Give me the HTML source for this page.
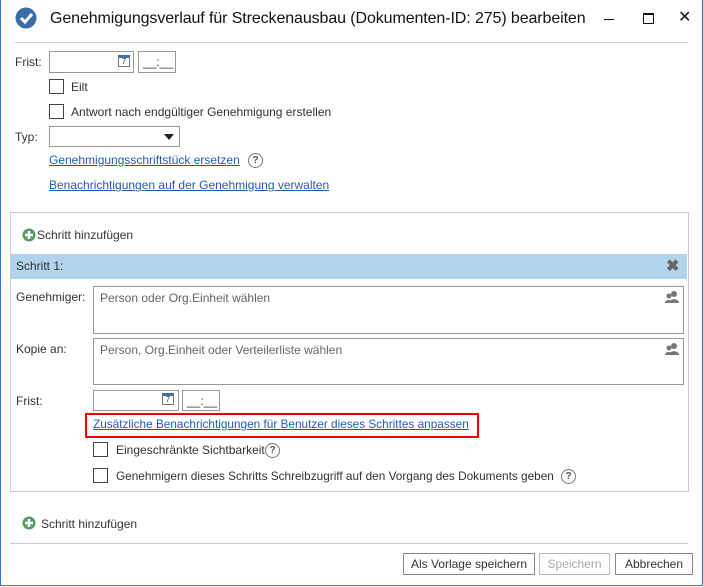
<!DOCTYPE html><html><head><style>
body{margin:0;width:703px;height:587px;background:#fff;font-family:"Liberation Sans",sans-serif;font-size:12px;color:#333;position:relative;overflow:hidden}
.a{position:absolute}
.win{position:absolute;left:0;top:0;width:701px;height:585px;border:1px solid #2b79d0;border-top:none}
.in{position:absolute;border:1px solid #999;background:#fff;box-sizing:border-box}
.cb{position:absolute;width:15px;height:15px;border:1px solid #444;box-sizing:border-box;background:#fff}
a{color:#1a5fb4;text-decoration:underline}
.btn{position:absolute;border:1px solid #888;background:#fff;box-sizing:border-box;text-align:center;line-height:20px;font-size:12px}
.q{position:absolute;width:13px;height:13px;border:1px solid #777;border-radius:50%;font-size:10px;line-height:13px;text-align:center;color:#555;font-weight:bold}
.cal{position:absolute;width:12px;height:12px;border:1px solid #777;border-top:3px solid #3a6fb0;box-sizing:border-box;font-size:8px;line-height:8px;text-align:center}
</style></head><body>
<div class="win"></div>
<svg class="a" style="left:15px;top:7px" width="22" height="22"><circle cx="11" cy="11" r="10.5" fill="#3b6ea8"/><path d="M6 11l4 4 7-8" stroke="#fff" stroke-width="3" fill="none"/></svg>
<div class="a" style="left:50px;top:10px;font-size:16px;letter-spacing:-0.1px;color:#111">Genehmigungsverlauf für Streckenausbau (Dokumenten-ID: 275) bearbeiten</div>
<div class="a" style="left:604px;top:19px;width:10px;height:1px;background:#111"></div>
<div class="a" style="left:643px;top:13px;width:9px;height:8px;border:1px solid #111;border-top-width:2px"></div>
<div class="a" style="left:678px;top:7px;font-size:16px;color:#111">✕</div>
<div class="a" style="left:15px;top:42px;width:673px;height:1px;background:#ccc"></div>

<div class="a" style="left:15px;top:55px">Frist:</div>
<div class="in" style="left:49px;top:51px;width:85px;height:22px"></div><div class="cal" style="left:118px;top:55px">7</div>
<div class="in" style="left:138px;top:51px;width:38px;height:22px;padding:3px 0 0 4px">__:__</div>
<div class="cb" style="left:49px;top:79px"></div><div class="a" style="left:71px;top:80px">Eilt</div>
<div class="cb" style="left:49px;top:104px"></div><div class="a" style="left:71px;top:105px">Antwort nach endgültiger Genehmigung erstellen</div>
<div class="a" style="left:15px;top:130px">Typ:</div>
<div class="in" style="left:49px;top:126px;width:131px;height:21px"></div>
<div class="a" style="left:164px;top:134px;border:5px solid transparent;border-top:6px solid #222;border-bottom:0"></div>
<a class="a" style="left:49px;top:153px">Genehmigungsschriftstück ersetzen</a><div class="q" style="left:248px;top:153px">?</div>
<a class="a" style="left:49px;top:178px">Benachrichtigungen auf der Genehmigung verwalten</a>

<div class="a" style="left:10px;top:212px;width:677px;height:278px;border:1px solid #ccc"></div>
<svg class="a" style="left:22px;top:228px" width="14" height="14"><circle cx="7" cy="7" r="6.5" fill="#5a9a6a"/><path d="M7 3v8M3 7h8" stroke="#fff" stroke-width="2.5"/></svg>
<div class="a" style="left:37px;top:228px">Schritt hinzufügen</div>
<div class="a" style="left:11px;top:254px;width:676px;height:25px;background:#b1d4ec"></div>
<div class="a" style="left:16px;top:259px">Schritt 1:</div>
<div class="a" style="left:666px;top:256px;font-size:16px;font-weight:bold;color:#666">✖</div>
<div class="a" style="left:16px;top:290px">Genehmiger:</div>
<div class="in" style="left:93px;top:286px;width:591px;height:48px;color:#666;padding:4px 6px">Person oder Org.Einheit wählen</div>
<svg class="a" style="left:664px;top:290px" width="16" height="14"><circle cx="10" cy="4" r="3" fill="#777"/><path d="M5 13c0-5 10-5 10 0z" fill="#777"/><circle cx="5" cy="6" r="2.5" fill="#777"/><path d="M1 13c0-4 7-4 7 0z" fill="#777"/></svg>
<div class="a" style="left:16px;top:342px">Kopie an:</div>
<div class="in" style="left:93px;top:338px;width:591px;height:47px;color:#666;padding:4px 6px">Person, Org.Einheit oder Verteilerliste wählen</div>
<svg class="a" style="left:664px;top:342px" width="16" height="14"><circle cx="10" cy="4" r="3" fill="#777"/><path d="M5 13c0-5 10-5 10 0z" fill="#777"/><circle cx="5" cy="6" r="2.5" fill="#777"/><path d="M1 13c0-4 7-4 7 0z" fill="#777"/></svg>
<div class="a" style="left:16px;top:394px">Frist:</div>
<div class="in" style="left:93px;top:390px;width:86px;height:21px"></div><div class="cal" style="left:162px;top:393px">7</div>
<div class="in" style="left:182px;top:390px;width:38px;height:21px;padding:3px 0 0 4px">__:__</div>
<div class="a" style="left:85px;top:413px;width:390px;height:21px;border:2px solid #e00"></div>
<a class="a" style="left:93px;top:417px;font-size:11.8px">Zusätzliche Benachrichtigungen für Benutzer dieses Schrittes anpassen</a>
<div class="cb" style="left:93px;top:442px"></div><div class="a" style="left:116px;top:443px">Eingeschränkte Sichtbarkeit</div><div class="q" style="left:265px;top:443px">?</div>
<div class="cb" style="left:93px;top:468px"></div><div class="a" style="left:116px;top:469px;font-size:11.8px">Genehmigern dieses Schritts Schreibzugriff auf den Vorgang des Dokuments geben</div><div class="q" style="left:561px;top:469px">?</div>

<svg class="a" style="left:22px;top:516px" width="14" height="14"><circle cx="7" cy="7" r="6.5" fill="#5a9a6a"/><path d="M7 3v8M3 7h8" stroke="#fff" stroke-width="2.5"/></svg>
<div class="a" style="left:41px;top:517px">Schritt hinzufügen</div>
<div class="a" style="left:10px;top:543px;width:678px;height:1px;background:#ccc"></div>
<div class="btn" style="left:403px;top:553px;width:132px;height:22px">Als Vorlage speichern</div>
<div class="btn" style="left:539px;top:553px;width:71px;height:22px;color:#aaa;border-color:#bbb">Speichern</div>
<div class="btn" style="left:615px;top:553px;width:78px;height:22px">Abbrechen</div>
</body></html>
